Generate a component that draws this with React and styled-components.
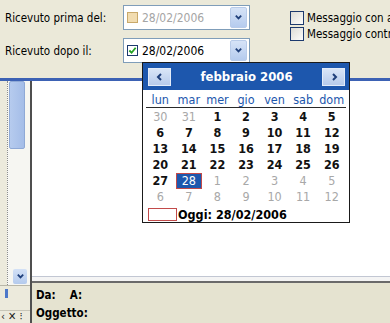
import React from 'react';
import styled, { createGlobalStyle } from 'styled-components';

const GlobalStyle = createGlobalStyle`
  body {
    margin: 0;
    font-family: 'DejaVu Sans Condensed', 'Liberation Sans', Arial, sans-serif;
    background: #fff;
  }
`;

const Window = styled.div`
  position: relative;
  width: 390px;
  height: 323px;
  overflow: hidden;
  display: flex;
  flex-direction: column;
  font-size: 11px;
  color: #000;
`;

const TopPanel = styled.div`
  height: 78px;
  background: #ebe9d9;
  display: flex;
  flex-shrink: 0;
  overflow: hidden;
`;

const FilterGrid = styled.div`
  display: grid;
  grid-template-columns: 118px 127px;
  grid-auto-rows: 25px;
  row-gap: 8px;
  padding: 5px 0 0 5px;
  align-items: center;
  flex-shrink: 0;
`;

const Label = styled.span`
  font-size: 11.5px;
`;

const Combo = styled.div`
  height: 25px;
  box-sizing: border-box;
  border: 1px solid #7f9db9;
  background: #fff;
  display: flex;
  align-items: center;
  padding: 0 2px 0 3px;
  gap: 4px;
`;

const ComboBox = styled.span`
  width: 11px;
  height: 11px;
  box-sizing: border-box;
  border: 1px solid ${(p) => (p.$on ? '#1c3a6e' : '#c9a96a')};
  background: ${(p) => (p.$on ? '#fff' : '#f1dcb0')};
  display: flex;
  align-items: center;
  justify-content: center;
`;

const ComboText = styled.span`
  flex: 1;
  font-size: 12px;
  color: ${(p) => (p.$muted ? '#a5a5a5' : '#000')};
`;

const DropButton = styled.span`
  width: 15px;
  height: 19px;
  border-radius: 2px;
  background: linear-gradient(#d6e3f7, #b5cbee);
  border: 1px solid #b8cbe9;
  display: flex;
  align-items: center;
  justify-content: center;
`;

const OptionsColumn = styled.div`
  display: flex;
  flex-direction: column;
  gap: 2px;
  padding: 11px 0 0 40px;
  min-width: 0;
`;

const OptionRow = styled.label`
  display: flex;
  align-items: center;
  gap: 3px;
  white-space: nowrap;
  font-size: 11.5px;
  line-height: 14px;
`;

const Tick = styled.span`
  width: 12px;
  height: 12px;
  flex-shrink: 0;
  border: 1px solid #1c3a6e;
  background: linear-gradient(135deg, #dcdcd6, #fdfdfb);
`;

const BlueBar = styled.div`
  height: 3px;
  background: #3d62b4;
  flex-shrink: 0;
`;

const Body = styled.div`
  flex: 1;
  display: flex;
  min-height: 0;
`;

const LeftRail = styled.div`
  width: 30px;
  border-right: 2px solid #4f4f4f;
  background: #eceadc;
  display: flex;
  flex-direction: column;
  flex-shrink: 0;
`;

const Track = styled.div`
  flex: 1;
  margin-left: 7px;
  border-left: 1px dotted #8c8c8c;
  background: #f6f6f2;
  display: flex;
  flex-direction: column;
  justify-content: space-between;
  padding: 0 0 1px 1px;
`;

const Thumb = styled.div`
  width: 16px;
  height: 68px;
  box-sizing: border-box;
  border: 1px solid #8fa9d6;
  border-radius: 2px;
  background: linear-gradient(90deg, #b6cbee, #a4bde8);
`;

const ArrowButton = styled.div`
  width: 14px;
  height: 15px;
  margin-left: 4px;
  border-radius: 2px;
  background: linear-gradient(#d3e1f6, #b4caed);
  display: flex;
  align-items: center;
  justify-content: center;
`;

const RailFooter = styled.div`
  height: 37px;
  border-top: 1px solid #b8b6a8;
  display: flex;
  flex-direction: column;
  justify-content: space-between;
`;

const RailTab = styled.div`
  width: 3px;
  height: 9px;
  margin: 3px 0 0 5px;
  background: #4d78c9;
`;

const RailIcons = styled.div`
  font-size: 11px;
  line-height: 12px;
  color: #222;
  padding-left: 1px;
  border-top: 1px solid #c8c6b8;
  white-space: nowrap;
`;

const Main = styled.div`
  flex: 1;
  display: flex;
  flex-direction: column;
`;

const Content = styled.div`
  flex: 1;
  background: #fff;
  border-bottom: 1px solid #c2c7d3;
`;

const Divider = styled.div`
  height: 4px;
  background: #f4f4f4;
  border-bottom: 2px solid #6a6a6a;
`;

const Header = styled.div`
  height: 40px;
  background: #e5e3d0;
  padding: 5px 0 0 4px;
  box-sizing: border-box;
  display: flex;
  flex-direction: column;
  gap: 4px;
  font-weight: bold;
  font-size: 11.5px;
`;

const HeaderRow = styled.div`
  display: flex;
  gap: 14px;
`;

const Popup = styled.div`
  position: absolute;
  left: 142px;
  top: 62px;
  width: 208px;
  height: 161px;
  box-sizing: border-box;
  border: 1px solid #1a1a1a;
  background: #fff;
  display: flex;
  flex-direction: column;
`;

const CalHead = styled.div`
  height: 31px;
  background: #1d57ad;
  display: flex;
  align-items: center;
  justify-content: space-between;
  padding: 0 4px 0 5px;
`;

const NavButton = styled.span`
  width: 23px;
  height: 18px;
  box-sizing: border-box;
  border: 1px solid #e3ecf9;
  background: linear-gradient(#d9e5f7, #b7cbeb);
  display: flex;
  align-items: center;
  justify-content: center;
`;

const MonthTitle = styled.span`
  color: #fff;
  font-weight: bold;
  font-size: 13px;
`;

const DayNames = styled.div`
  display: grid;
  grid-template-columns: repeat(7, 1fr);
  margin: 3px 3px 0;
  padding-bottom: 1px;
  border-bottom: 1px solid #2a2a2a;
  color: #1d57ad;
  font-size: 12.5px;
  text-align: center;
  line-height: 13px;
`;

const DayGrid = styled.div`
  display: grid;
  grid-template-columns: repeat(7, 1fr);
  grid-auto-rows: 16px;
  margin: 1px 3px 0;
  text-align: center;
`;

const Day = styled.span`
  font-size: 12.5px;
  line-height: 16px;
  font-weight: ${(p) => (p.$other ? 'normal' : 'bold')};
  color: ${(p) => (p.$other ? '#a8a8a8' : '#111')};
  ${(p) =>
    p.$selected &&
    `
    background: #1d57ad;
    color: #fff;
    font-weight: normal;
    outline: 1px solid #c24a4a;
    outline-offset: -1px;
    margin: 0 1px;
  `}
`;

const TodayRow = styled.div`
  display: flex;
  align-items: center;
  gap: 1px;
  margin: 2px 0 0 5px;
  font-weight: bold;
  font-size: 12.5px;
`;

const TodayMark = styled.span`
  width: 27px;
  height: 11px;
  border: 1px solid #c24a4a;
`;

const Chevron = ({ dir = 'down', size = 9 }) => {
  const paths = {
    down: 'M2 3 L5 6 L8 3',
    left: 'M6 2 L3 5 L6 8',
    right: 'M4 2 L7 5 L4 8',
  };
  return (
    <svg width={size} height={size} viewBox="0 0 10 10">
      <path d={paths[dir]} fill="none" stroke="#1f3f7a" strokeWidth="2" />
    </svg>
  );
};

const weeks = [
  [[30, 1], [31, 1], [1], [2], [3], [4], [5]],
  [[6], [7], [8], [9], [10], [11], [12]],
  [[13], [14], [15], [16], [17], [18], [19]],
  [[20], [21], [22], [23], [24], [25], [26]],
  [[27], [28, 0, 1], [1, 1], [2, 1], [3, 1], [4, 1], [5, 1]],
  [[6, 1], [7, 1], [8, 1], [9, 1], [10, 1], [11, 1], [12, 1]],
];

const App = () => {
  return (
    <Window>
      <GlobalStyle />
      <TopPanel>
        <FilterGrid>
          <Label>Ricevuto prima del:</Label>
          <Combo>
            <ComboBox />
            <ComboText $muted>28/02/2006</ComboText>
            <DropButton>
              <Chevron />
            </DropButton>
          </Combo>
          <Label>Ricevuto dopo il:</Label>
          <Combo>
            <ComboBox $on>
              <svg width="9" height="9" viewBox="0 0 10 10">
                <path d="M1.5 5 L4 7.5 L8.5 2" fill="none" stroke="#21a121" strokeWidth="2" />
              </svg>
            </ComboBox>
            <ComboText>28/02/2006</ComboText>
            <DropButton>
              <Chevron />
            </DropButton>
          </Combo>
        </FilterGrid>
        <OptionsColumn>
          <OptionRow>
            <Tick />
            Messaggio con allegati
          </OptionRow>
          <OptionRow>
            <Tick />
            Messaggio contrassegnato
          </OptionRow>
        </OptionsColumn>
      </TopPanel>
      <BlueBar />
      <Body>
        <LeftRail>
          <Track>
            <Thumb />
            <ArrowButton>
              <Chevron />
            </ArrowButton>
          </Track>
          <RailFooter>
            <RailTab />
            <RailIcons>‹ ✕ ⁝</RailIcons>
          </RailFooter>
        </LeftRail>
        <Main>
          <Content />
          <Divider />
          <Header>
            <HeaderRow>
              <span>Da:</span>
              <span>A:</span>
            </HeaderRow>
            <span>Oggetto:</span>
          </Header>
        </Main>
      </Body>
      <Popup>
        <CalHead>
          <NavButton>
            <Chevron dir="left" size={10} />
          </NavButton>
          <MonthTitle>febbraio 2006</MonthTitle>
          <NavButton>
            <Chevron dir="right" size={10} />
          </NavButton>
        </CalHead>
        <DayNames>
          {['lun', 'mar', 'mer', 'gio', 'ven', 'sab', 'dom'].map((d) => (
            <span key={d}>{d}</span>
          ))}
        </DayNames>
        <DayGrid>
          {weeks.flat().map(([n, other, sel], i) => (
            <Day key={i} $other={!!other} $selected={!!sel}>
              {n}
            </Day>
          ))}
        </DayGrid>
        <TodayRow>
          <TodayMark />
          Oggi: 28/02/2006
        </TodayRow>
      </Popup>
    </Window>
  );
};

export default App;
